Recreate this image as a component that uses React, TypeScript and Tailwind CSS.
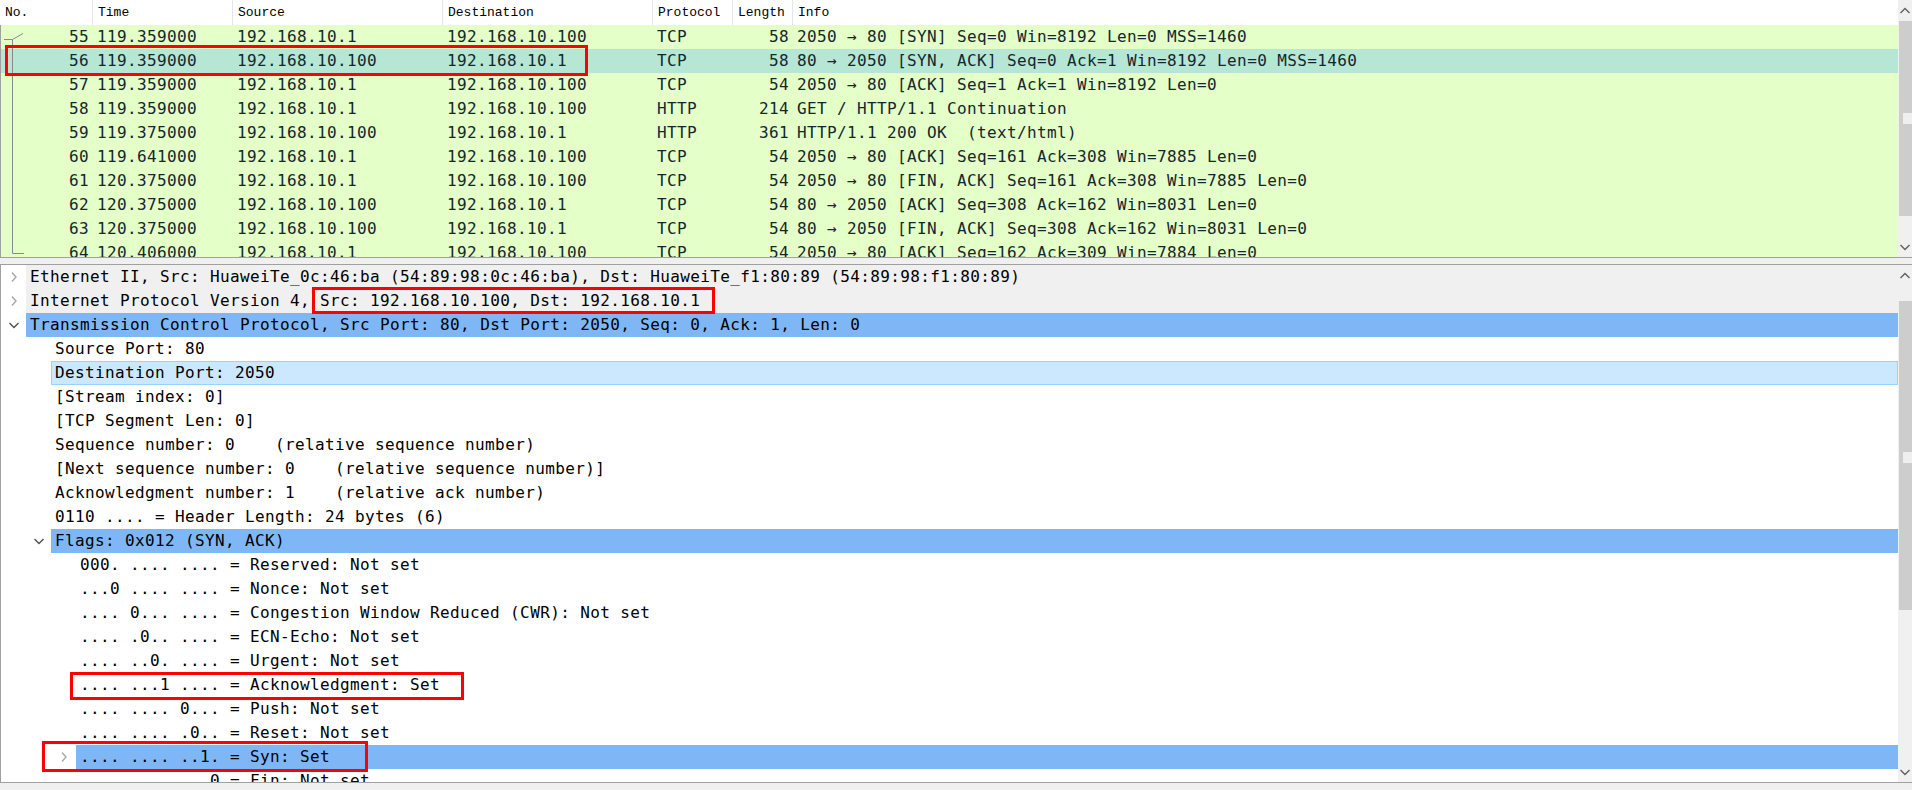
type Packet = {
  no: string
  time: string
  src: string
  dst: string
  proto: string
  len: string
  info: string
}

const packets: Packet[] = [
  { no: '55', time: '119.359000', src: '192.168.10.1', dst: '192.168.10.100', proto: 'TCP', len: '58', info: '2050 → 80 [SYN] Seq=0 Win=8192 Len=0 MSS=1460' },
  { no: '56', time: '119.359000', src: '192.168.10.100', dst: '192.168.10.1', proto: 'TCP', len: '58', info: '80 → 2050 [SYN, ACK] Seq=0 Ack=1 Win=8192 Len=0 MSS=1460' },
  { no: '57', time: '119.359000', src: '192.168.10.1', dst: '192.168.10.100', proto: 'TCP', len: '54', info: '2050 → 80 [ACK] Seq=1 Ack=1 Win=8192 Len=0' },
  { no: '58', time: '119.359000', src: '192.168.10.1', dst: '192.168.10.100', proto: 'HTTP', len: '214', info: 'GET / HTTP/1.1 Continuation' },
  { no: '59', time: '119.375000', src: '192.168.10.100', dst: '192.168.10.1', proto: 'HTTP', len: '361', info: 'HTTP/1.1 200 OK  (text/html)' },
  { no: '60', time: '119.641000', src: '192.168.10.1', dst: '192.168.10.100', proto: 'TCP', len: '54', info: '2050 → 80 [ACK] Seq=161 Ack=308 Win=7885 Len=0' },
  { no: '61', time: '120.375000', src: '192.168.10.1', dst: '192.168.10.100', proto: 'TCP', len: '54', info: '2050 → 80 [FIN, ACK] Seq=161 Ack=308 Win=7885 Len=0' },
  { no: '62', time: '120.375000', src: '192.168.10.100', dst: '192.168.10.1', proto: 'TCP', len: '54', info: '80 → 2050 [ACK] Seq=308 Ack=162 Win=8031 Len=0' },
  { no: '63', time: '120.375000', src: '192.168.10.100', dst: '192.168.10.1', proto: 'TCP', len: '54', info: '80 → 2050 [FIN, ACK] Seq=308 Ack=162 Win=8031 Len=0' },
  { no: '64', time: '120.406000', src: '192.168.10.1', dst: '192.168.10.100', proto: 'TCP', len: '54', info: '2050 → 80 [ACK] Seq=162 Ack=309 Win=7884 Len=0' },
]

type TreeNode = {
  level: 0 | 1 | 2
  text: string
  arrow?: 'open' | 'closed'
  top?: boolean
  selected?: boolean
  hover?: boolean
}

const tree: TreeNode[] = [
  { level: 0, arrow: 'closed', top: true, text: 'Ethernet II, Src: HuaweiTe_0c:46:ba (54:89:98:0c:46:ba), Dst: HuaweiTe_f1:80:89 (54:89:98:f1:80:89)' },
  { level: 0, arrow: 'closed', top: true, text: 'Internet Protocol Version 4, Src: 192.168.10.100, Dst: 192.168.10.1' },
  { level: 0, arrow: 'open', selected: true, text: 'Transmission Control Protocol, Src Port: 80, Dst Port: 2050, Seq: 0, Ack: 1, Len: 0' },
  { level: 1, text: 'Source Port: 80' },
  { level: 1, hover: true, text: 'Destination Port: 2050' },
  { level: 1, text: '[Stream index: 0]' },
  { level: 1, text: '[TCP Segment Len: 0]' },
  { level: 1, text: 'Sequence number: 0    (relative sequence number)' },
  { level: 1, text: '[Next sequence number: 0    (relative sequence number)]' },
  { level: 1, text: 'Acknowledgment number: 1    (relative ack number)' },
  { level: 1, text: '0110 .... = Header Length: 24 bytes (6)' },
  { level: 1, arrow: 'open', selected: true, text: 'Flags: 0x012 (SYN, ACK)' },
  { level: 2, text: '000. .... .... = Reserved: Not set' },
  { level: 2, text: '...0 .... .... = Nonce: Not set' },
  { level: 2, text: '.... 0... .... = Congestion Window Reduced (CWR): Not set' },
  { level: 2, text: '.... .0.. .... = ECN-Echo: Not set' },
  { level: 2, text: '.... ..0. .... = Urgent: Not set' },
  { level: 2, text: '.... ...1 .... = Acknowledgment: Set' },
  { level: 2, text: '.... .... 0... = Push: Not set' },
  { level: 2, text: '.... .... .0.. = Reset: Not set' },
  { level: 2, arrow: 'closed', selected: true, text: '.... .... ..1. = Syn: Set' },
  { level: 2, text: '.... .... ...0 = Fin: Not set' },
]

const indent = ['w-[0px]', 'w-[25px]', 'w-[50px]']

// conversation bracket drawn in the No. column
const Bracket = ({ kind }: { kind: 'start' | 'mid' | 'end' }) => (
  <svg width="26" height="24" viewBox="0 0 26 24" className="shrink-0">
    {kind === 'start' && (
      <>
        <line x1="3" y1="14.5" x2="11.5" y2="14.5" stroke="#8a8a8a" />
        <line x1="11.5" y1="14.5" x2="22" y2="8.5" stroke="#8a8a8a" />
        <line x1="11.5" y1="14.5" x2="11.5" y2="24" stroke="#8a8a8a" />
      </>
    )}
    {kind === 'mid' && <line x1="11.5" y1="0" x2="11.5" y2="24" stroke="#8a8a8a" />}
    {kind === 'end' && (
      <>
        <line x1="11.5" y1="0" x2="11.5" y2="12.5" stroke="#8a8a8a" />
        <line x1="11.5" y1="12.5" x2="23" y2="12.5" stroke="#8a8a8a" />
      </>
    )}
  </svg>
)

const Chevron = ({ dir, color }: { dir: 'up' | 'down' | 'right'; color: string }) => {
  if (dir === 'right')
    return (
      <svg width="8" height="12" viewBox="0 0 8 12">
        <polyline points="2,1.5 6,6 2,10.5" fill="none" stroke={color} strokeWidth="1.4" />
      </svg>
    )
  return (
    <svg width="12" height="8" viewBox="0 0 12 8">
      <polyline
        points={dir === 'down' ? '1.5,2 6,6.5 10.5,2' : '1.5,6 6,1.5 10.5,6'}
        fill="none"
        stroke={color}
        strokeWidth="1.4"
      />
    </svg>
  )
}

const PacketScrollbar = () => (
  <div className="w-[14px] shrink-0 bg-[#f0f0f0] flex flex-col">
    <div className="h-[21px] flex items-center justify-center">
      <Chevron dir="up" color="#606060" />
    </div>
    <div className="relative h-[195px] ml-[1px] bg-[#cdcdcd]">
      <div className="absolute right-0 top-[92px] w-[9px] h-[11px] bg-[#efefef]" />
    </div>
    <div className="flex-1" />
    <div className="h-[21px] flex items-center justify-center">
      <Chevron dir="down" color="#606060" />
    </div>
  </div>
)

const DetailScrollbar = () => (
  <div className="w-[14px] shrink-0 bg-[#f0f0f0] flex flex-col">
    <div className="h-[21px] flex items-center justify-center">
      <Chevron dir="up" color="#606060" />
    </div>
    <div className="h-[15px]" />
    <div className="relative h-[309px] ml-[1px] bg-[#cdcdcd]">
      <div className="absolute right-0 top-[151px] w-[9px] h-[11px] bg-[#efefef]" />
    </div>
    <div className="flex-1" />
    <div className="h-[21px] flex items-center justify-center">
      <Chevron dir="down" color="#606060" />
    </div>
  </div>
)

const headerCols = [
  { label: 'No.', w: 'w-[93px]' },
  { label: 'Time', w: 'w-[140px]' },
  { label: 'Source', w: 'w-[210px]' },
  { label: 'Destination', w: 'w-[210px]' },
  { label: 'Protocol', w: 'w-[80px]' },
  { label: 'Length', w: 'w-[60px]' },
]

export default function App() {
  return (
    <div className="relative w-[1912px] h-[790px] overflow-hidden bg-[#f0f0f0] flex flex-col font-['DejaVu_Sans_Mono',monospace] text-[16px] tracking-[0.37px]">
      {/* Packet list */}
      <div className="h-[258px] shrink-0 flex border-b border-[#a0a0a0] bg-white">
        <div className="flex-1 flex flex-col overflow-hidden">
          <div className="h-[25px] shrink-0 flex bg-white font-['Liberation_Mono',monospace] text-[13px] tracking-normal text-black">
            {headerCols.map((c) => (
              <div key={c.label} className={`${c.w} shrink-0 pl-[5px] leading-[25px] border-r border-[#e5e5e5]`}>
                {c.label}
              </div>
            ))}
            <div className="flex-1 pl-[5px] leading-[25px]">Info</div>
          </div>
          <div className="flex-1 overflow-hidden border-l border-[#a0a0a0] bg-[#e4ffc7]">
            {packets.map((p, i) => (
              <div
                key={p.no}
                className={`flex h-[24px] leading-[24px] whitespace-pre text-[#12272e] ${
                  p.no === '56' ? 'bg-[#b5e7d4]' : 'bg-[#e4ffc7]'
                }`}
              >
                <div className="w-[92px] shrink-0 flex justify-between pr-[4px]">
                  <Bracket kind={i === 0 ? 'start' : i === packets.length - 1 ? 'end' : 'mid'} />
                  <span>{p.no}</span>
                </div>
                <div className="w-[140px] shrink-0 pl-[4px]">{p.time}</div>
                <div className="w-[210px] shrink-0 pl-[4px]">{p.src}</div>
                <div className="w-[210px] shrink-0 pl-[4px]">{p.dst}</div>
                <div className="w-[80px] shrink-0 pl-[4px]">{p.proto}</div>
                <div className="w-[60px] shrink-0 pr-[4px] text-right">{p.len}</div>
                <div className="flex-1 pl-[4px]">{p.info}</div>
              </div>
            ))}
          </div>
        </div>
        <PacketScrollbar />
      </div>

      <div className="h-[6px] shrink-0" />

      {/* Packet details */}
      <div className="h-[519px] shrink-0 flex border-y border-l border-[#a0a0a0] bg-white">
        <div className="flex-1 overflow-hidden">
          {tree.map((n, i) => (
            <div key={i} className="flex h-[24px] text-black">
              <div className={`${indent[n.level]} shrink-0`} />
              <div className="w-[25px] shrink-0 flex items-center justify-center">
                {n.arrow === 'closed' && <Chevron dir="right" color="#a8a8a8" />}
                {n.arrow === 'open' && <Chevron dir="down" color="#505050" />}
              </div>
              {n.hover ? (
                <div className="flex-1 whitespace-pre pl-[3px] leading-[22px] border border-[#99d1ff] bg-[#cce8ff]">
                  {n.text}
                </div>
              ) : (
                <div
                  className={`flex-1 whitespace-pre pl-[4px] leading-[24px] ${
                    n.selected ? 'bg-[#7fb7f6]' : n.top ? 'bg-[#f0f0f0]' : 'bg-white'
                  }`}
                >
                  {n.text}
                </div>
              )}
            </div>
          ))}
        </div>
        <DetailScrollbar />
      </div>

      <div className="flex-1" />

      {/* annotation boxes */}
      <div className="absolute left-[5px] top-[45px] w-[583px] h-[31px] border-[3px] border-[#ff0000]" />
      <div className="absolute left-[312px] top-[287px] w-[403px] h-[27px] border-[3px] border-[#ff0000]" />
      <div className="absolute left-[70px] top-[672px] w-[394px] h-[28px] border-[3px] border-[#ff0000]" />
      <div className="absolute left-[42px] top-[741px] w-[326px] h-[31px] border-[3px] border-[#ff0000]" />
    </div>
  )
}
